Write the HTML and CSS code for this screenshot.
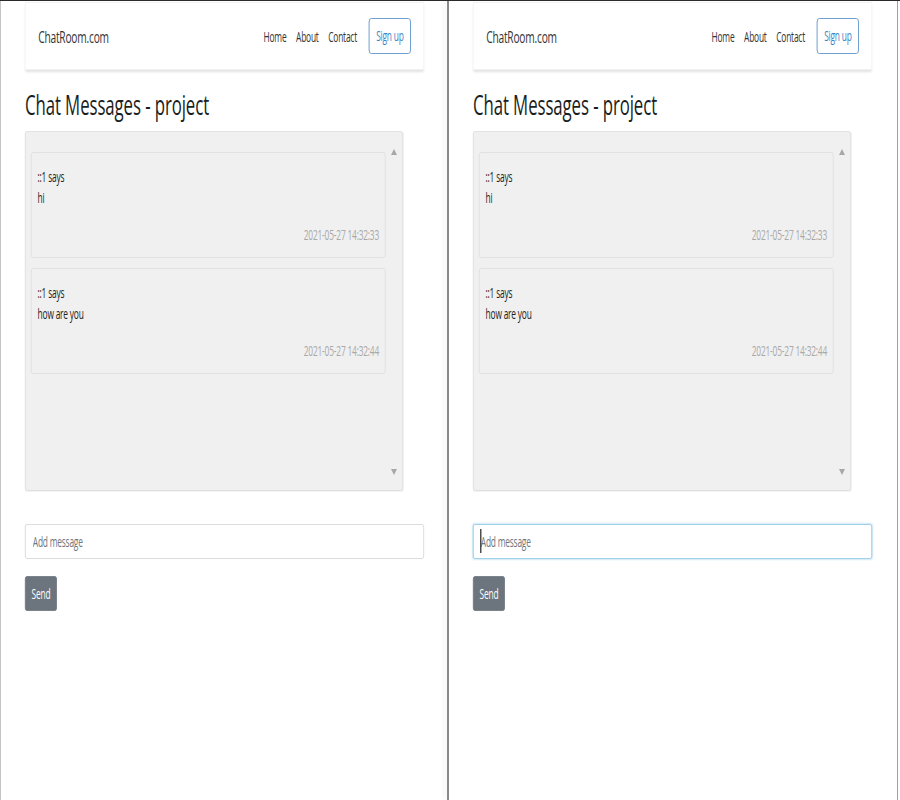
FILE: index.html
```html
<!DOCTYPE html>
<html lang="en">
<head>
<meta charset="utf-8">
<title>ChatRoom.com</title>
<link rel="stylesheet" href="styles.css">
</head>
<body>
<div class="screens">
  <div class="pane pane-left">
    <div class="page">
      <nav class="navbar">
        <a class="brand" href="#">ChatRoom.com</a>
        <div class="nav-right">
          <a class="nav-link" href="#">Home</a>
          <a class="nav-link" href="#">About</a>
          <a class="nav-link" href="#">Contact</a>
          <button class="btn-signup">Sign up</button>
        </div>
      </nav>
      <h2 class="title">Chat Messages - project</h2>
      <div class="chat-box">
        <div class="messages">
          <div class="msg">
            <div class="msg-user">::1 says</div>
            <div class="msg-text">hi</div>
            <div class="msg-time">2021-05-27 14:32:33</div>
          </div>
          <div class="msg">
            <div class="msg-user">::1 says</div>
            <div class="msg-text">how are you</div>
            <div class="msg-time">2021-05-27 14:32:44</div>
          </div>
        </div>
        <div class="scrollbar">
          <svg class="arrow" viewBox="0 0 10 6" width="10" height="6"><polygon points="5,0 10,6 0,6" fill="#a8a8a8"/></svg>
          <svg class="arrow" viewBox="0 0 10 6" width="10" height="6"><polygon points="0,0 10,0 5,6" fill="#a8a8a8"/></svg>
        </div>
      </div>
      <form class="send-form">
        <div class="input-wrap">
          <input class="msg-input" type="text" placeholder="Add message">
        </div>
        <button class="btn-send" type="button">Send</button>
      </form>
    </div>
  </div>
  <div class="divider"></div>
  <div class="pane pane-right">
    <div class="page">
      <nav class="navbar">
        <a class="brand" href="#">ChatRoom.com</a>
        <div class="nav-right">
          <a class="nav-link" href="#">Home</a>
          <a class="nav-link" href="#">About</a>
          <a class="nav-link" href="#">Contact</a>
          <button class="btn-signup">Sign up</button>
        </div>
      </nav>
      <h2 class="title">Chat Messages - project</h2>
      <div class="chat-box">
        <div class="messages">
          <div class="msg">
            <div class="msg-user">::1 says</div>
            <div class="msg-text">hi</div>
            <div class="msg-time">2021-05-27 14:32:33</div>
          </div>
          <div class="msg">
            <div class="msg-user">::1 says</div>
            <div class="msg-text">how are you</div>
            <div class="msg-time">2021-05-27 14:32:44</div>
          </div>
        </div>
        <div class="scrollbar">
          <svg class="arrow" viewBox="0 0 10 6" width="10" height="6"><polygon points="5,0 10,6 0,6" fill="#a8a8a8"/></svg>
          <svg class="arrow" viewBox="0 0 10 6" width="10" height="6"><polygon points="0,0 10,0 5,6" fill="#a8a8a8"/></svg>
        </div>
      </div>
      <form class="send-form">
        <div class="input-wrap focused">
          <input class="msg-input" type="text" placeholder="Add message">
        </div>
        <button class="btn-send" type="button">Send</button>
      </form>
    </div>
  </div>
  <div class="edge"></div>
</div>
</body>
</html>
```
FILE: styles.css
```css
* { box-sizing: border-box; }
html, body { margin: 0; padding: 0; background: #fff; }
body {
  font-family: "Open Sans", "Noto Sans", "Liberation Sans", sans-serif;
  color: #212529;
  width: 900px;
  height: 800px;
  overflow: hidden;
  letter-spacing: -0.35px;
}
.screens {
  display: flex;
  width: 900px;
  height: 800px;
  border-top: 1px solid #2a2a2a;
}
.pane {
  width: 447px;
  height: 799px;
  overflow: hidden;
  background: #fff;
}
.pane-left { border-left: 1px solid #c4c4c4; }
.pane-right { width: 448px; }
.divider {
  width: 2px;
  background: #8a8a8a;
  box-shadow: -3px 0 4px rgba(0,0,0,0.06);
}
.edge {
  width: 1px;
  background: #a0a0a0;
}
.page {
  width: 743px;
  transform: scaleX(0.6);
  transform-origin: 0 0;
  padding: 0 38px 0 40px;
}
.navbar {
  display: flex;
  align-items: center;
  justify-content: space-between;
  padding: 15px 21px;
  margin-top: 1px;
  background: #fff;
  border: 1px solid #f2f2f2;
  box-shadow: 0 2px 3px rgba(0,0,0,0.12);
}
.brand {
  font-size: 17px;
  color: #333;
  text-decoration: none;
}
.nav-right {
  display: flex;
  align-items: center;
  gap: 16px;
}
.nav-link {
  font-size: 14px;
  color: #333;
  text-decoration: none;
}
.btn-signup {
  margin-left: 4px;
  font-family: inherit;
  letter-spacing: inherit;
  font-size: 14px;
  line-height: 22px;
  padding: 6px 11px;
  color: #3d7fc1;
  background: #fff;
  border: 1px solid #4a89c8;
  border-radius: 4px;
}
.title {
  font-size: 28px;
  font-weight: 400;
  line-height: 34px;
  margin: 17px 0 10px;
  color: #1a1e22;
  letter-spacing: -0.15px;
}
.chat-box {
  display: flex;
  width: 630px;
  height: 360px;
  background: #f0f0f0;
  border: 1px solid #dcdcdc;
  border-radius: 3px;
  padding: 20px 0 17px 9px;
  box-shadow: 0 1px 1px rgba(0,0,0,0.05);
}
.messages {
  flex: 1;
  display: flex;
  flex-direction: column;
  gap: 10px;
}
.msg {
  border: 1px solid #dedede;
  border-radius: 3px;
  background: #f0f0f0;
  padding: 13px 10px 12px;
  font-size: 14px;
  line-height: 21px;
  height: 106px;
}
.msg-user, .msg-text { color: #222; }
.msg-text { margin-bottom: 16px; }
.msg-time {
  text-align: right;
  color: #a9a9a9;
}
.scrollbar {
  width: 28px;
  display: flex;
  flex-direction: column;
  align-items: center;
  justify-content: space-between;
  margin: -3px 0 -2px;
}
.arrow { display: block; }
.send-form {
  margin-top: 33px;
}
.input-wrap {
  position: relative;
}
.msg-input {
  display: block;
  width: 100%;
  height: 35px;
  font-family: inherit;
  letter-spacing: inherit;
  font-size: 14px;
  padding: 6px 12px;
  color: #495057;
  background: #fff;
  border: 1px solid #cfd4d8;
  border-radius: 3px;
  outline: none;
}
.msg-input::placeholder { color: #6c757d; }
.input-wrap.focused .msg-input {
  border-color: #8fc6e6;
  box-shadow: 0 0 2px 1px rgba(120, 190, 230, 0.35);
}
.input-wrap.focused::after {
  content: "";
  position: absolute;
  left: 12px;
  top: 5px;
  width: 2px;
  height: 24px;
  background: #222;
}
.btn-send {
  display: block;
  margin-top: 17px;
  height: 35px;
  font-family: inherit;
  letter-spacing: inherit;
  font-size: 14px;
  padding: 6px 10px;
  color: #fff;
  background: #6c757d;
  border: 1px solid #6c757d;
  border-radius: 3px;
}
```
